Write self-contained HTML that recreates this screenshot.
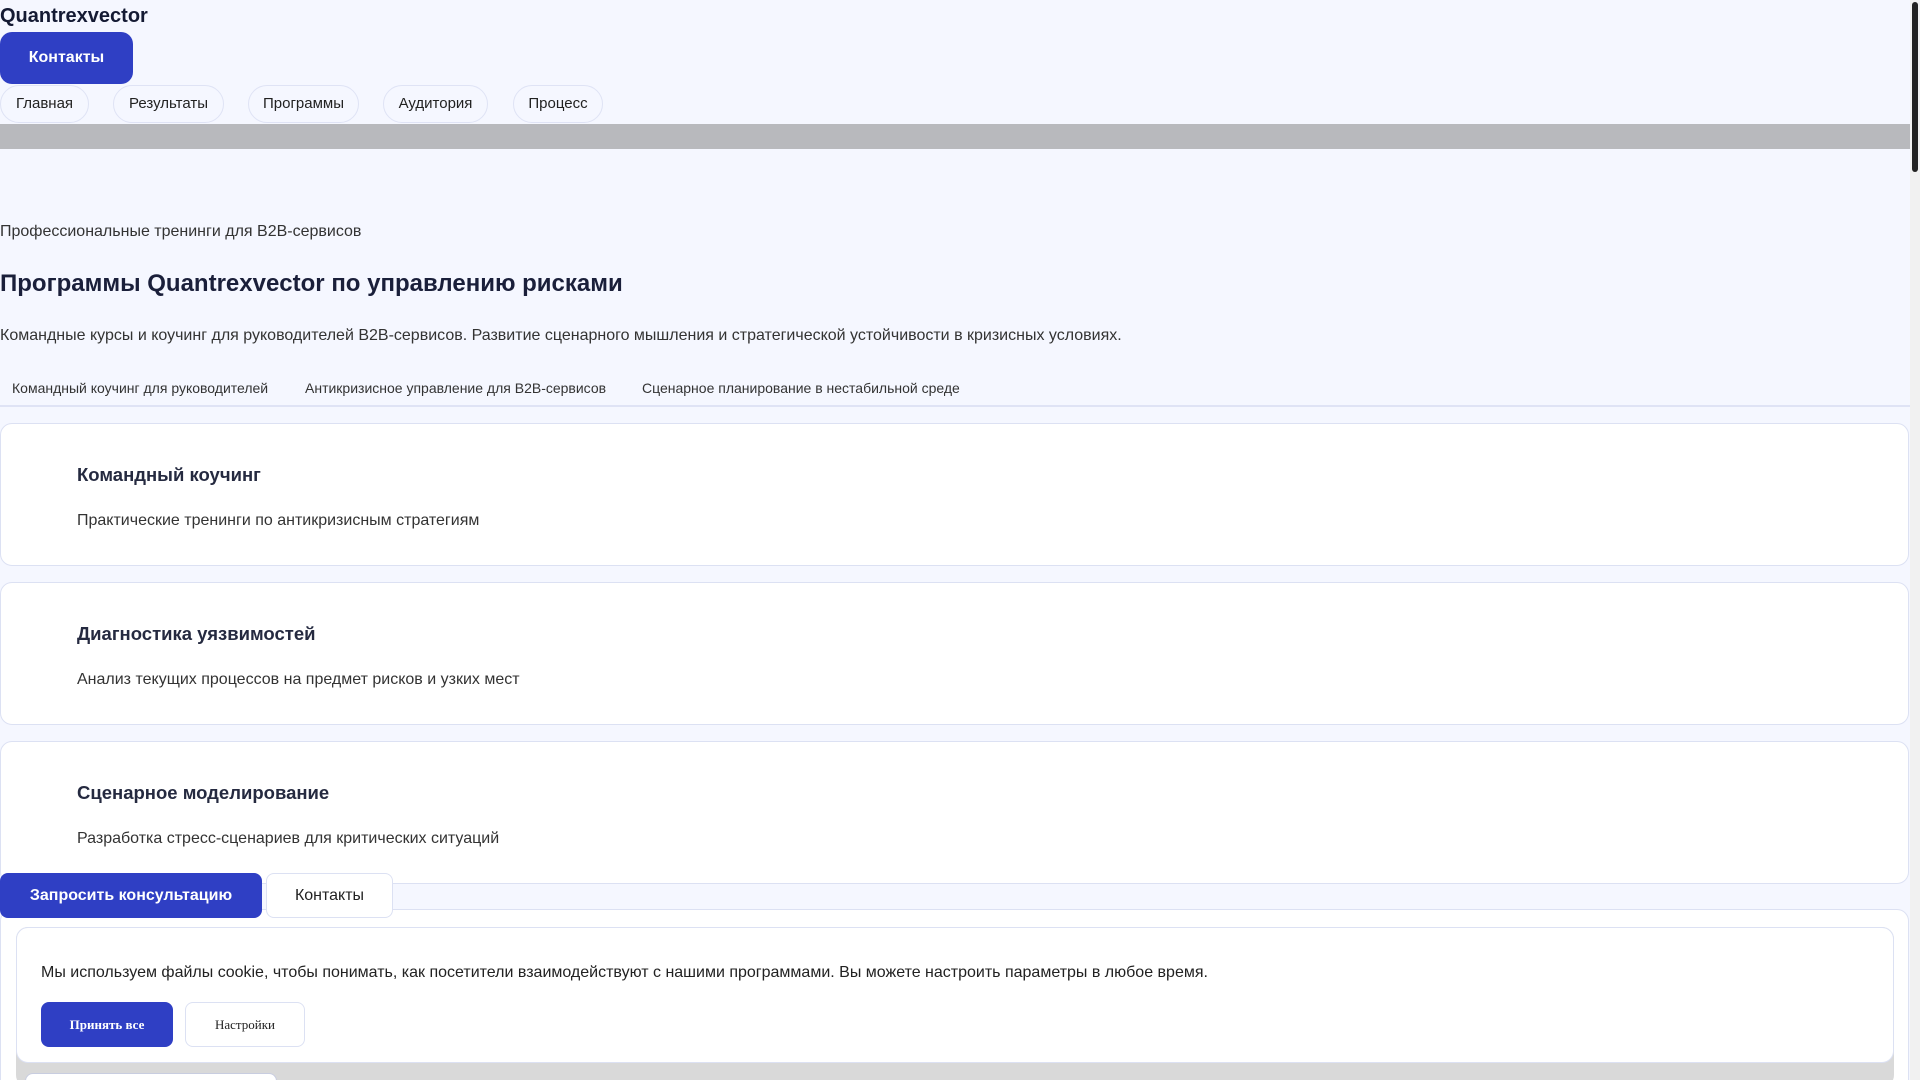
<!DOCTYPE html>
<html><head><meta charset="utf-8"><style>
*{box-sizing:border-box;margin:0;padding:0}
html,body{width:1920px;height:1080px;overflow:hidden;background:#f5f7ff;font-family:"Liberation Sans",sans-serif;color:#1a1f3a}
#wrap{position:relative;width:1920px;height:1080px;overflow:hidden}
.abs{position:absolute}
.logo{left:0;top:5px;font-size:20px;font-weight:700;color:#141a33}
.btn1{left:0;top:32px;width:133px;height:52px;background:#2f3fc4;color:#fff;border-radius:12px;font-weight:700;font-size:16px;display:flex;align-items:center;justify-content:center}
.pill{top:85px;height:38px;border:1px solid #dfe3f5;border-radius:19px;font-size:15px;display:flex;align-items:center;justify-content:center;color:#222;padding-bottom:2px}
.bar{left:0;top:124px;width:1910px;height:25px;background:#b8b9bd}
.sb{left:1910px;top:0;width:10px;height:1080px;background:#f1f1f1}
.thumb{left:1912px;top:2px;width:6px;height:170px;background:#222;border-radius:3px}
.card{left:0;width:1909px;height:143px;background:#fff;border:1px solid #dce1f3;border-radius:12px}
.card h3{position:absolute;left:76px;top:40px;font-size:18.5px;font-weight:700;color:#252a40}
.card p{position:absolute;left:76px;top:88px;font-size:16px;color:#333}
.tab{top:380px;font-size:14px;color:#333}
</style></head><body><div id="wrap">
<div class="abs logo">Quantrexvector</div>
<div class="abs btn1">Контакты</div>
<div class="abs pill" style="left:0;width:89px">Главная</div>
<div class="abs pill" style="left:113px;width:111px">Результаты</div>
<div class="abs pill" style="left:248px;width:111px">Программы</div>
<div class="abs pill" style="left:383px;width:105px">Аудитория</div>
<div class="abs pill" style="left:513px;width:90px">Процесс</div>
<div class="abs bar"></div>
<div class="abs" style="left:0;top:223px;font-size:16px;color:#333">Профессиональные тренинги для B2B-сервисов</div>
<div class="abs" style="left:0;top:270px;font-size:24px;font-weight:700;color:#1a1f3a">Программы Quantrexvector по управлению рисками</div>
<div class="abs" style="left:0;top:327px;font-size:16px;color:#333">Командные курсы и коучинг для руководителей B2B-сервисов. Развитие сценарного мышления и стратегической устойчивости в кризисных условиях.</div>
<div class="abs tab" style="left:12px">Командный коучинг для руководителей</div>
<div class="abs tab" style="left:305px">Антикризисное управление для B2B-сервисов</div>
<div class="abs tab" style="left:642px">Сценарное планирование в нестабильной среде</div>
<div class="abs" style="left:0;top:405px;width:1910px;height:2px;background:#dfe3f5"></div>
<div class="abs card" style="top:423px"><h3>Командный коучинг</h3><p>Практические тренинги по антикризисным стратегиям</p></div>
<div class="abs card" style="top:582px"><h3>Диагностика уязвимостей</h3><p>Анализ текущих процессов на предмет рисков и узких мест</p></div>
<div class="abs card" style="top:741px"><h3>Сценарное моделирование</h3><p>Разработка стресс-сценариев для критических ситуаций</p></div>
<div class="abs" style="left:0;top:909px;width:1909px;height:200px;background:#fff;border:1px solid #dce1f3;border-radius:12px"></div>
<div class="abs" style="left:16px;top:927px;width:1878px;height:160px;background:#d9d9d9;border-radius:12px"></div>
<div class="abs" style="left:0;top:873px;width:262px;height:45px;background:#2f3fc4;color:#fff;border-radius:8px;font-weight:700;font-size:16px;display:flex;align-items:center;justify-content:center">Запросить консультацию</div>
<div class="abs" style="left:266px;top:873px;width:127px;height:45px;background:#fff;border:1px solid #dce1f3;border-radius:8px;font-size:16px;display:flex;align-items:center;justify-content:center;color:#222">Контакты</div>
<div class="abs" style="left:16px;top:927px;width:1878px;height:136px;background:#fff;border:1px solid #dce1f3;border-radius:12px"></div>
<div class="abs" style="left:41px;top:964px;font-size:16px;color:#222">Мы используем файлы cookie, чтобы понимать, как посетители взаимодействуют с нашими программами. Вы можете настроить параметры в любое время.</div>
<div class="abs" style="left:41px;top:1002px;width:132px;height:45px;background:#2f3fc4;color:#fff;border-radius:8px;font-family:'Liberation Serif',serif;font-weight:700;font-size:13px;display:flex;align-items:center;justify-content:center">Принять все</div>
<div class="abs" style="left:185px;top:1002px;width:120px;height:45px;background:#fff;border:1px solid #dce1f3;border-radius:8px;font-family:'Liberation Serif',serif;font-size:13px;display:flex;align-items:center;justify-content:center;color:#222">Настройки</div>
<div class="abs" style="left:25px;top:1073px;width:252px;height:30px;background:#fff;border:1px solid #c8cde0;border-radius:8px"></div>
<div class="abs sb"></div><div class="abs thumb"></div>
</div></body></html>
